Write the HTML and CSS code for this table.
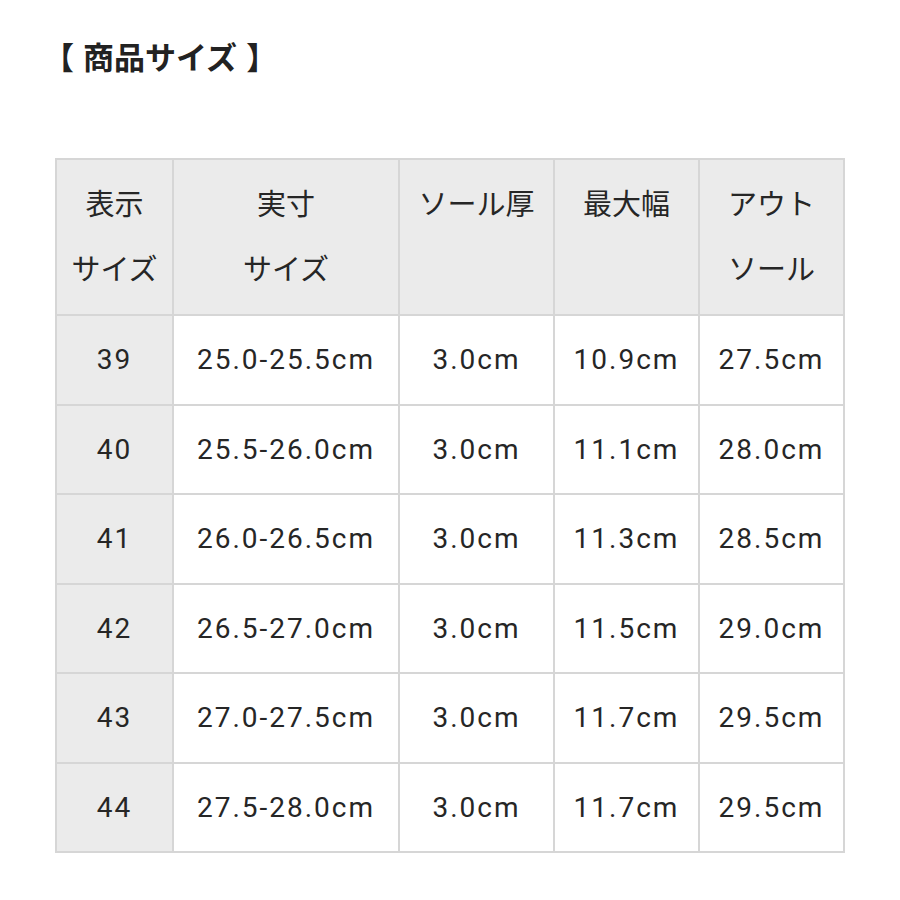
FILE: index.html
```html
<!DOCTYPE html>
<html lang="ja">
<head>
<meta charset="utf-8">
<link rel="stylesheet" href="styles.css">
</head>
<body>
<div class="page">
  <h1 class="title">【 商品サイズ 】</h1>
  <table class="size-table">
    <colgroup>
      <col class="c1"><col class="c2"><col class="c3"><col class="c4"><col class="c5">
    </colgroup>
    <thead>
      <tr>
        <th>表示<br>サイズ</th>
        <th>実寸<br>サイズ</th>
        <th>ソール厚</th>
        <th>最大幅</th>
        <th>アウト<br>ソール</th>
      </tr>
    </thead>
    <tbody>
      <tr><td class="key">39</td><td>25.0-25.5cm</td><td>3.0cm</td><td>10.9cm</td><td>27.5cm</td></tr>
      <tr><td class="key">40</td><td>25.5-26.0cm</td><td>3.0cm</td><td>11.1cm</td><td>28.0cm</td></tr>
      <tr><td class="key">41</td><td>26.0-26.5cm</td><td>3.0cm</td><td>11.3cm</td><td>28.5cm</td></tr>
      <tr><td class="key">42</td><td>26.5-27.0cm</td><td>3.0cm</td><td>11.5cm</td><td>29.0cm</td></tr>
      <tr><td class="key">43</td><td>27.0-27.5cm</td><td>3.0cm</td><td>11.7cm</td><td>29.5cm</td></tr>
      <tr><td class="key">44</td><td>27.5-28.0cm</td><td>3.0cm</td><td>11.7cm</td><td>29.5cm</td></tr>
    </tbody>
  </table>
</div>
</body>
</html>
```
FILE: styles.css
```css
html, body {
  margin: 0;
  padding: 0;
  background: #ffffff;
}
.page {
  padding: 33px 55px 0 55px;
  color: #262626;
  font-family: Roboto, "Noto Sans CJK JP", sans-serif;
}
.title {
  margin: 0 0 0 -12px;
  font-family: "Noto Sans CJK JP", sans-serif;
  font-size: 31px;
  font-weight: 700;
  line-height: 46px;
  word-spacing: 2px;
  color: #222222;
}
.size-table {
  margin-top: 79px;
  width: 788px;
  border-collapse: collapse;
  table-layout: fixed;
}
.c1 { width: 117px; }
.c2 { width: 226px; }
.c3 { width: 155px; }
.c4 { width: 145px; }
.c5 { width: 145px; }
.size-table th,
.size-table td {
  border: 2px solid #d6d6d6;
  text-align: center;
}
.size-table th {
  background: #ebebeb;
  font-family: "Noto Sans CJK JP", sans-serif;
  font-weight: 400;
  font-size: 29px;
  line-height: 65px;
  vertical-align: top;
  padding: 10px 0 14px 0;
  height: 130px;
}
.size-table td {
  height: 87.5px;
  padding: 0;
  font-size: 28px;
  letter-spacing: 2px;
  vertical-align: middle;
}
.size-table td.key {
  background: #ebebeb;
}
```
